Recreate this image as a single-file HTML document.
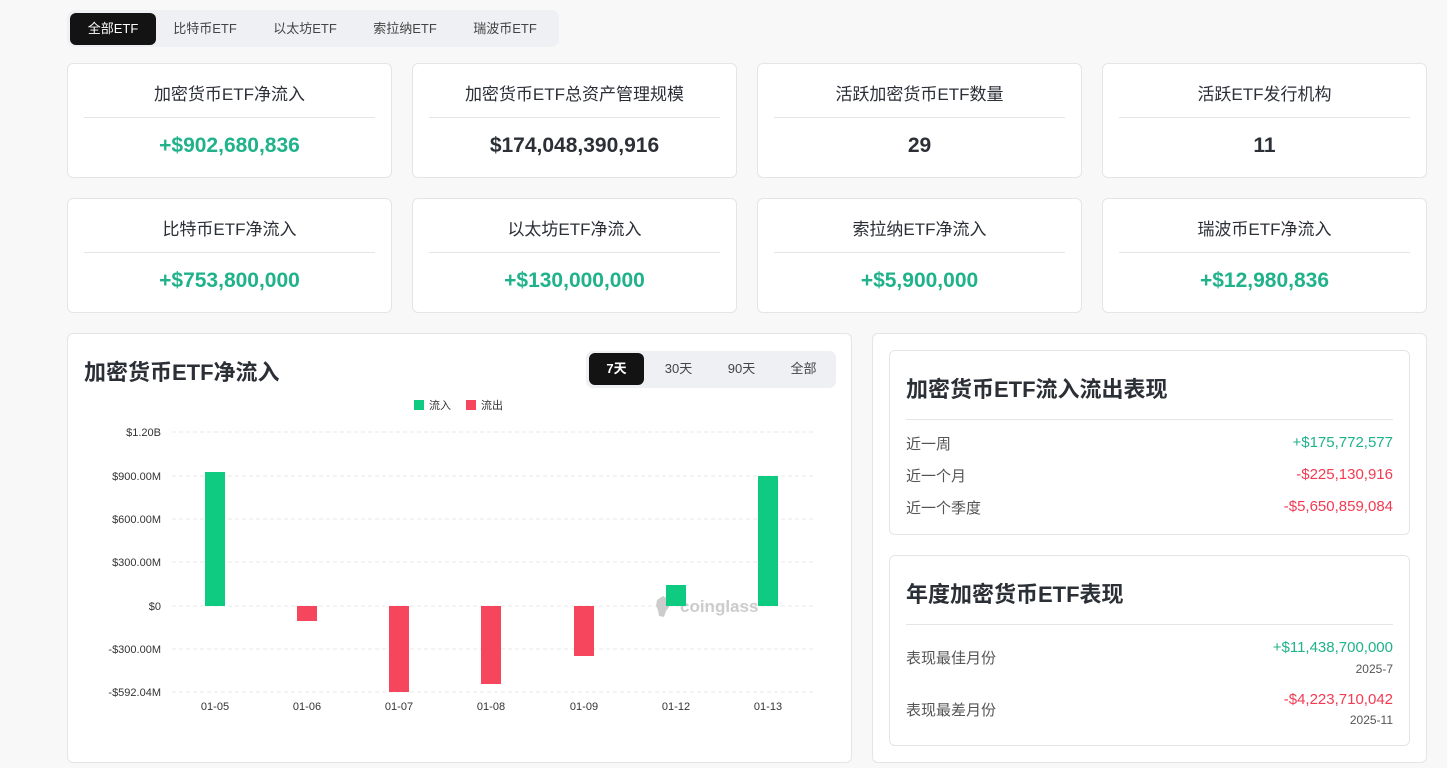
<!DOCTYPE html>
<html><head><meta charset="utf-8"><style>
*{box-sizing:border-box;margin:0;padding:0}
body{width:1447px;height:768px;background:#f8f8f8;font-family:"Liberation Sans","Noto Sans CJK SC",sans-serif;color:#2b2f36;position:relative;overflow:hidden}
.abs{position:absolute}
.tabs{left:67px;top:10px;width:492px;height:37px;background:#eef0f3;border-radius:8px}
.tab{position:absolute;top:3px;height:32px;line-height:32px;font-size:13px;color:#444;text-align:center}
.tab.on{background:#131313;color:#fff;border-radius:6px}
.card{position:absolute;background:#fff;border:1px solid #e3e5e8;border-radius:6px}
.stat .t{position:absolute;left:0;right:0;top:16px;text-align:center;font-size:17px;color:#2b2f36}
.stat .d{position:absolute;left:16px;right:16px;top:53px;border-top:1px solid #e3e5e8}
.stat .v{position:absolute;left:0;right:0;top:70px;text-align:center;font-size:21px;font-weight:bold;color:#2b2f36}
.stat .v.g,.g{color:#20b28a}.r{color:#f23a52}
.row{position:absolute;left:16px;right:16px;font-size:15px;color:#555}
.row span{position:absolute;right:0;top:1px}
</style></head><body>
<div class="abs tabs">
<div class="tab on" style="left:3px;width:86px">全部ETF</div>
<div class="tab" style="left:92px;width:92px">比特币ETF</div>
<div class="tab" style="left:192px;width:92px">以太坊ETF</div>
<div class="tab" style="left:292px;width:92px">索拉纳ETF</div>
<div class="tab" style="left:392px;width:92px">瑞波币ETF</div>
</div>

<div class="card stat" style="left:67px;top:63px;width:325px;height:115px"><div class="t">加密货币ETF净流入</div><div class="d"></div><div class="v g">+$902,680,836</div></div>
<div class="card stat" style="left:412px;top:63px;width:325px;height:115px"><div class="t">加密货币ETF总资产管理规模</div><div class="d"></div><div class="v">$174,048,390,916</div></div>
<div class="card stat" style="left:757px;top:63px;width:325px;height:115px"><div class="t">活跃加密货币ETF数量</div><div class="d"></div><div class="v">29</div></div>
<div class="card stat" style="left:1102px;top:63px;width:325px;height:115px"><div class="t">活跃ETF发行机构</div><div class="d"></div><div class="v">11</div></div>
<div class="card stat" style="left:67px;top:198px;width:325px;height:115px"><div class="t">比特币ETF净流入</div><div class="d"></div><div class="v g">+$753,800,000</div></div>
<div class="card stat" style="left:412px;top:198px;width:325px;height:115px"><div class="t">以太坊ETF净流入</div><div class="d"></div><div class="v g">+$130,000,000</div></div>
<div class="card stat" style="left:757px;top:198px;width:325px;height:115px"><div class="t">索拉纳ETF净流入</div><div class="d"></div><div class="v g">+$5,900,000</div></div>
<div class="card stat" style="left:1102px;top:198px;width:325px;height:115px"><div class="t">瑞波币ETF净流入</div><div class="d"></div><div class="v g">+$12,980,836</div></div>

<div class="card" style="left:67px;top:333px;width:785px;height:430px">
<div class="abs" style="left:16px;top:21px;font-size:22px;font-weight:bold;color:#2b2f36">加密货币ETF净流入</div>
<div class="abs" style="left:518px;top:17px;width:250px;height:37px;background:#eef0f3;border-radius:7px">
<div class="tab on" style="left:3px;top:2px;width:55px;font-weight:bold">7天</div>
<div class="tab" style="left:65px;top:2px;width:55px">30天</div>
<div class="tab" style="left:128px;top:2px;width:55px">90天</div>
<div class="tab" style="left:190px;top:2px;width:55px">全部</div>
</div>
</div>
<svg class="abs" style="left:0;top:0" width="860" height="768" font-family="Liberation Sans,Noto Sans CJK SC,sans-serif" font-size="11" fill="#333">
<rect x="414" y="400" width="10" height="10" fill="#0ecb81"/><text x="429" y="409">流入</text>
<rect x="466" y="400" width="10" height="10" fill="#f6465d"/><text x="481" y="409">流出</text>
<g stroke="#e8e8e8" stroke-dasharray="4 3">
<line x1="172" x2="815" y1="432" y2="432"/><line x1="172" x2="815" y1="476" y2="476"/><line x1="172" x2="815" y1="519" y2="519"/><line x1="172" x2="815" y1="562" y2="562"/><line x1="172" x2="815" y1="606" y2="606"/><line x1="172" x2="815" y1="649" y2="649"/><line x1="172" x2="815" y1="692" y2="692"/>
</g>
<g text-anchor="end">
<text x="161" y="436">$1.20B</text><text x="161" y="480">$900.00M</text><text x="161" y="523">$600.00M</text><text x="161" y="566">$300.00M</text><text x="161" y="610">$0</text><text x="161" y="653">-$300.00M</text><text x="161" y="696">-$592.04M</text>
</g>
<text x="680" y="612" font-size="17" font-weight="bold" fill="#ccc">coinglass</text>
<path d="M657 600 l6-4 5 3 1 8 -3 4 -2 6 -5 -1 -1-6 -2-4z" fill="#ccc"/>
<rect x="205" y="472" width="20" height="134" fill="#0ecb81"/>
<rect x="297" y="606" width="20" height="15" fill="#f6465d"/>
<rect x="389" y="606" width="20" height="86" fill="#f6465d"/>
<rect x="481" y="606" width="20" height="78" fill="#f6465d"/>
<rect x="574" y="606" width="20" height="50" fill="#f6465d"/>
<rect x="666" y="585" width="20" height="21" fill="#0ecb81"/>
<rect x="758" y="476" width="20" height="130" fill="#0ecb81"/>
<g text-anchor="middle">
<text x="215" y="710">01-05</text><text x="307" y="710">01-06</text><text x="399" y="710">01-07</text><text x="491" y="710">01-08</text><text x="584" y="710">01-09</text><text x="676" y="710">01-12</text><text x="768" y="710">01-13</text>
</g>
</svg>

<div class="card" style="left:872px;top:333px;width:555px;height:430px"></div>
<div class="card" style="left:889px;top:350px;width:521px;height:185px">
<div class="abs" style="left:16px;top:21px;font-size:22px;font-weight:bold">加密货币ETF流入流出表现</div>
<div class="abs" style="left:16px;right:16px;top:68px;border-top:1px solid #e3e5e8"></div>
<div class="row" style="top:82px">近一周<span class="g">+$175,772,577</span></div>
<div class="row" style="top:114px">近一个月<span class="r">-$225,130,916</span></div>
<div class="row" style="top:146px">近一个季度<span class="r">-$5,650,859,084</span></div>
</div>
<div class="card" style="left:889px;top:555px;width:521px;height:191px">
<div class="abs" style="left:16px;top:21px;font-size:22px;font-weight:bold">年度加密货币ETF表现</div>
<div class="abs" style="left:16px;right:16px;top:68px;border-top:1px solid #e3e5e8"></div>
<div class="row" style="top:91px">表现最佳月份</div>
<div class="abs g" style="right:16px;top:83px;font-size:15px">+$11,438,700,000</div>
<div class="abs" style="right:16px;top:106px;font-size:12px;color:#555">2025-7</div>
<div class="row" style="top:143px">表现最差月份</div>
<div class="abs r" style="right:16px;top:135px;font-size:15px">-$4,223,710,042</div>
<div class="abs" style="right:16px;top:157px;font-size:12px;color:#555">2025-11</div>
</div>
</body></html>
